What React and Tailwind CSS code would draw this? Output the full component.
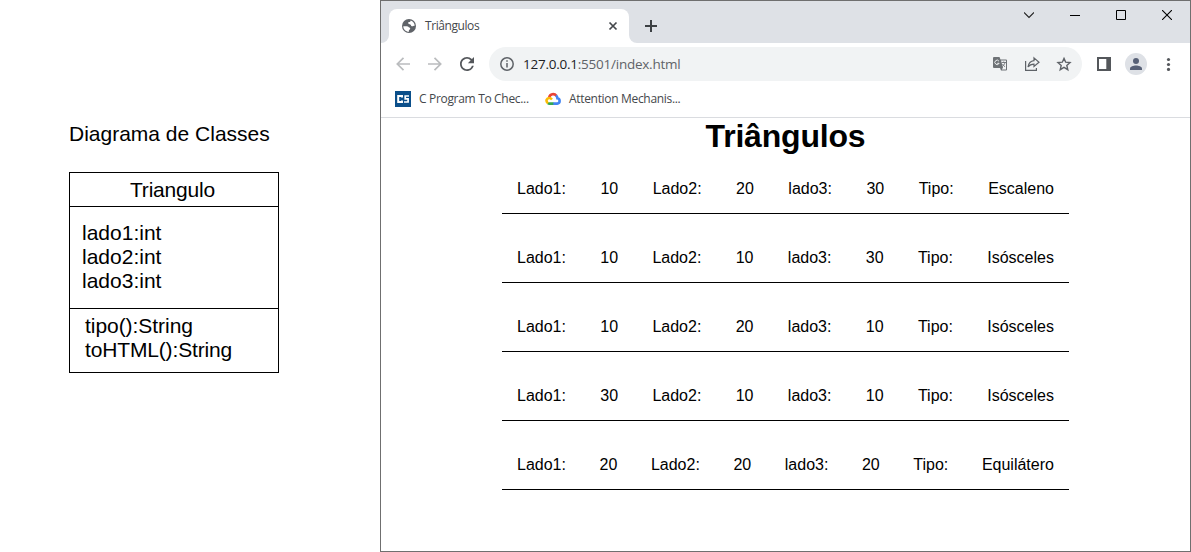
import React from "react";

const rows = [
  ["10", "20", "30", "Escaleno"],
  ["10", "10", "30", "Isósceles"],
  ["10", "20", "10", "Isósceles"],
  ["30", "10", "10", "Isósceles"],
  ["20", "20", "20", "Equilátero"],
];

function Svg({ size = 16, box = 24, className = "", children, ...rest }) {
  return (
    <svg width={size} height={size} viewBox={`0 0 ${box} ${box}`} className={`shrink-0 ${className}`} fill="none" {...rest}>
      {children}
    </svg>
  );
}

function ClassDiagram() {
  return (
    <section className="w-[380px] shrink-0 pl-[69px] pt-[122px] text-[21px] leading-6 text-black">
      <h2 className="whitespace-nowrap">Diagrama de Classes</h2>
      <div className="mt-[26px] h-[201px] w-[210px] border border-black">
        <div className="h-[34px] border-b border-black pt-[5px] pl-[60px] tracking-[-0.2px]">Triangulo</div>
        <div className="h-[102px] border-b border-black pt-[14px] pl-[12px]">
          <p>lado1:int</p>
          <p>lado2:int</p>
          <p>lado3:int</p>
        </div>
        <div className="pt-[5px] pl-[15px]">
          <p className="tracking-[-0.05px]">tipo():String</p>
          <p className="tracking-[-0.15px]">toHTML():String</p>
        </div>
      </div>
    </section>
  );
}

function TabStrip() {
  return (
    <div className="flex h-[42px] bg-[#dee1e6]">
      <div className="flex w-2 items-end bg-white">
        <div className="h-full w-2 rounded-br-lg bg-[#dee1e6]" />
      </div>
      <div className="mt-2 flex w-[240px] items-center rounded-t-lg bg-white pl-3">
        <Svg size={16} box={16}>
          <circle cx="8" cy="8" r="7" fill="#5f6368" />
          <path d="M2.300 8.200c1.500 0 3.300-.3 4.600.3.700.3.800.9 1.500 1.100.7.200 1 .6.7 1.300-.3.700-1.100.7-1.200 1.400v1.400C4.700 13.700 2.300 11.300 2.300 8.200z" fill="#fff" />
          <path d="M9.600 2.400c-.1 1-.5 1.500-1.500 1.700-1 .2-1.300.9-.6 1.600.7.700 1.700.4 2.200 1.100.5.600.3 1.300 1.100 1.500 1 .3 1.700-.5 2.900-.5 0-2.700-1.700-4.800-4.100-5.400z" fill="#fff" />
        </Svg>
        <span className="ml-2 w-[183px] font-['Open_Sans','Noto_Sans',sans-serif] text-[12px] tracking-[-0.42px] text-[#45484c]">
          Triângulos
        </span>
        <Svg size={10} box={10} stroke="#45484c" strokeWidth="1.7"><path d="M1.500 1.500l7 7M8.500 1.500l-7 7" /></Svg>
      </div>
      <div className="flex w-2 bg-white">
        <div className="h-full w-2 rounded-bl-lg bg-[#dee1e6]" />
      </div>
      <div className="mt-[19px] ml-2 h-3 w-3">
        <Svg size={12} box={12} stroke="#3c4043" strokeWidth="2"><path d="M6 0v12M0 6h12" /></Svg>
      </div>
      <div className="ml-auto flex h-7 items-center pr-[18px] gap-9">
        <Svg size={10} box={10} stroke="#222" strokeWidth="1.100"><path d="M0 2.500l5 5 5-5" /></Svg>
        <Svg size={10} box={10} stroke="#000"><path d="M0 5.500h10" /></Svg>
        <Svg size={10} box={10} stroke="#000"><path d="M.5.5h9v9h-9z" /></Svg>
        <Svg size={10} box={10} stroke="#000" strokeWidth="1.100"><path d="M0 0l10 10M10 0L0 10" /></Svg>
      </div>
    </div>
  );
}

function Toolbar() {
  return (
    <div className="flex h-[42px] items-center bg-white">
      <div className="ml-[15px] flex gap-[18px]">
        <Svg size={14} box={14} stroke="#babcbe" strokeWidth="1.700"><path d="M14 7H1.500M7.500 .8L1.300 7l6.200 6.200" /></Svg>
        <Svg size={14} box={14} stroke="#babcbe" strokeWidth="1.700"><path d="M0 7h12.500M6.500 .8L12.700 7l-6.200 6.200" /></Svg>
        <svg width="14" height="14" viewBox="4 4 16 16" className="shrink-0" fill="#54575b">
          <path d="M17.650 6.350A7.958 7.958 0 0 0 12 4c-4.420 0-7.990 3.580-7.990 8s3.570 8 7.990 8c3.730 0 6.840-2.550 7.730-6h-2.080A5.990 5.990 0 0 1 12 18c-3.310 0-6-2.690-6-6s2.690-6 6-6c1.660 0 3.140.69 4.220 1.780L13 11h7V4l-2.350 2.350z" />
        </svg>
      </div>
      <div className="ml-[15px] flex h-[34px] w-[593px] items-center rounded-full bg-[#f1f3f4] pl-[11px] pr-[10px]">
        <Svg size={14} box={14}>
          <circle cx="7" cy="7" r="6.200" stroke="#5f6368" strokeWidth="1.500" />
          <path d="M7 6v4.500M7 3.300v1.500" stroke="#5f6368" strokeWidth="1.500" />
        </Svg>
        <span className="ml-[9px] whitespace-nowrap font-['Open_Sans','Noto_Sans',sans-serif] text-[13.500px] tracking-[-0.24px] text-[#5f6368]">
          <span className="text-[#202124]">127.0.0.1</span>:5501/index.html
        </span>
        <div className="ml-auto flex items-center gap-4">
          <Svg size={16} box={16}>
            <path d="M2 1h5.500l1 2.500H14A1 1 0 0 1 15 4.500v9a1 1 0 0 1-1 1H9L8 12H2a1 1 0 0 1-1-1V2a1 1 0 0 1 1-1z" fill="#6e7276" />
            <path d="M9 4.500h5v9H9.800l1.200-1.800z" fill="#f1f3f4" />
            <path d="M6.900 5.100a2.200 2.200 0 1 0 .2 2.200H5.200" stroke="#f1f3f4" strokeWidth="1" />
            <path d="M9.600 6.500H14M11.700 5.500v1M13 6.500c-.5 2-1.500 3-2.700 4M10.500 8c.6 1.300 1.400 2 2.500 2.700" stroke="#6e7276" strokeWidth=".9" />
          </Svg>
          <Svg size={16} box={16} stroke="#5f6368" strokeWidth="1.200">
            <path d="M1.600 5v9.400h10.800V12" />
            <path d="M10 1.900l5 4.300-5 4.300V8.200C7.500 8.200 5.500 9 4 11c.5-3.500 2.500-6 6-6.400z" />
          </Svg>
          <Svg size={16} box={16} stroke="#5f6368" strokeWidth="1.400">
            <path d="M8 2.400l1.700 3.800 4.300.4-3.200 2.800 1 4.300L8 11.400l-3.800 2.300 1-4.300L2 6.600l4.300-.4z" />
          </Svg>
        </div>
      </div>
      <Svg size={14} box={14} className="ml-[15px]">
        <path d="M1 1h12v12H1z" stroke="#54575b" strokeWidth="2" />
        <path d="M9.300 0H14v14H9.300z" fill="#54575b" />
      </Svg>
      <div className="ml-[14px] flex h-[22px] w-[22px] items-center justify-center rounded-full bg-[#dee1e6]">
        <Svg size={12} box={12}>
          <g fill="#576076"><circle cx="6" cy="3" r="3" /><path d="M0 12v-1.500C0 8.500 3.500 7.500 6 7.500s6 1 6 3V12z" /></g>
        </Svg>
      </div>
      <Svg size={14} box={14} className="ml-[14px]">
        <g fill="#54575b"><circle cx="7.500" cy="2.500" r="1.600" /><circle cx="7.500" cy="7.500" r="1.600" /><circle cx="7.500" cy="12.400" r="1.600" /></g>
      </Svg>
    </div>
  );
}

function Bookmarks() {
  return (
    <div className="flex h-[33px] items-center border-b border-[#dadce0] bg-white pb-1 pl-[14px] font-['Open_Sans','Noto_Sans',sans-serif] text-[12px] tracking-[-0.32px] text-[#45484c]">
      <div className="flex h-4 w-4 shrink-0 items-center justify-center bg-[#0b4f8a]">
        <Svg size={16} box={16} stroke="#fff" strokeWidth="2">
          <path d="M7 6.500V5H3.200v6H7V9.500" />
          <path d="M14 5h-3.800v2.900h2.900V11H9" strokeWidth="1.700" />
        </Svg>
      </div>
      <span className="ml-2 w-[126px] whitespace-nowrap">C Program To Chec...</span>
      <Svg size={16} box={16} strokeWidth="2.600">
        <path d="M4.200 6.300C5 2.800 9.200 2 11.500 4.800" stroke="#ea4335" />
        <path d="M11 4.500c1 .8 1.300 1.600 1.400 2.700 3 .3 3 5.200-.2 5.400H8" stroke="#4285f4" />
        <path d="M8.300 12.600H4.600c-.8 0-1.300-.2-1.800-.6" stroke="#34a853" />
        <path d="M3 12.200C.2 10 1.800 7 4.300 7c1.200 0 1.800.5 2.700 1.500" stroke="#fbbc04" />
      </Svg>
      <span className="ml-2 whitespace-nowrap">Attention Mechanis...</span>
    </div>
  );
}

export default function App() {
  return (
    <main className="flex h-[552px] w-[1191px] overflow-hidden bg-white font-['Liberation_Sans',Arial,sans-serif] text-black">
      <ClassDiagram />
      <div className="flex h-[552px] w-[811px] flex-col border border-[#6f6f6f] bg-white">
        <TabStrip />
        <Toolbar />
        <Bookmarks />
        <div className="flex flex-col items-center">
          <h1 className="text-[32px] leading-[37px] font-bold tracking-[-0.2px]">Triângulos</h1>
          <div className="mt-[10px] flex w-[567px] flex-col gap-5">
            {rows.map(([a, b, c, kind], i) => (
              <div key={i} className="flex h-[49px] justify-between border-b border-black px-[15px] pt-[15px] text-[16px] leading-[18px]">
                <span>Lado1:</span><span>{a}</span>
                <span>Lado2:</span><span>{b}</span>
                <span>lado3:</span><span>{c}</span>
                <span>Tipo:</span><span>{kind}</span>
              </div>
            ))}
          </div>
        </div>
      </div>
    </main>
  );
}
